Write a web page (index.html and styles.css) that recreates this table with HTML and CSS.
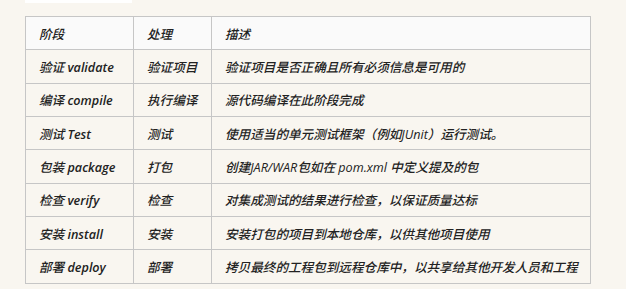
FILE: index.html
```html
<!DOCTYPE html>
<html lang="zh-CN">
<head>
<meta charset="utf-8">
<link rel="stylesheet" href="styles.css">
</head>
<body>
<div class="page">
  <div class="snippet"></div>
  <table class="phases">
    <colgroup>
      <col class="c1"><col class="c2"><col class="c3">
    </colgroup>
    <thead>
      <tr><th>阶段</th><th>处理</th><th>描述</th></tr>
    </thead>
    <tbody>
      <tr><td>验证 <span class="en">validate</span></td><td>验证项目</td><td>验证项目是否正确且所有必须信息是可用的</td></tr>
      <tr><td>编译 <span class="en">compile</span></td><td>执行编译</td><td>源代码编译在此阶段完成</td></tr>
      <tr><td>测试 <span class="en">Test</span></td><td>测试</td><td>使用适当的单元测试框架（例如JUnit）运行测试。</td></tr>
      <tr><td>包装 <span class="en">package</span></td><td>打包</td><td>创建JAR/WAR包如在 pom.xml 中定义提及的包</td></tr>
      <tr><td>检查 <span class="en">verify</span></td><td>检查</td><td>对集成测试的结果进行检查，以保证质量达标</td></tr>
      <tr><td>安装 <span class="en">install</span></td><td>安装</td><td>安装打包的项目到本地仓库，以供其他项目使用</td></tr>
      <tr><td>部署 <span class="en">deploy</span></td><td>部署</td><td>拷贝最终的工程包到远程仓库中，以共享给其他开发人员和工程</td></tr>
    </tbody>
  </table>
</div>
</body>
</html>
```
FILE: styles.css
```css
html, body {
  margin: 0;
  padding: 0;
  background: #f9f6f0;
}
.page {
  padding: 0 37px 0 25px;
  font-family: "Open Sans", "Noto Sans CJK SC", sans-serif;
  color: #222;
}
.snippet {
  width: 107px;
  height: 3px;
  background: #ffffff;
  margin-bottom: 13px;
}
.phases {
  width: 565px;
  border-collapse: collapse;
  table-layout: fixed;
  font-size: 12.6px;
  font-style: italic;
  font-weight: 500;
}
.c1 { width: 108px; }
.c2 { width: 78px; }
.c3 { width: 379px; }
.phases th,
.phases td {
  border: 1px solid #c6c6c6;
  padding: 0 0 0 13px;
  text-align: left;
  font-weight: 500;
  white-space: nowrap;
  box-sizing: border-box;
  height: 33.33px;
}
.phases .en {
  font-weight: 600;
}
.phases thead th {
  background: #fafafa;
}
```
